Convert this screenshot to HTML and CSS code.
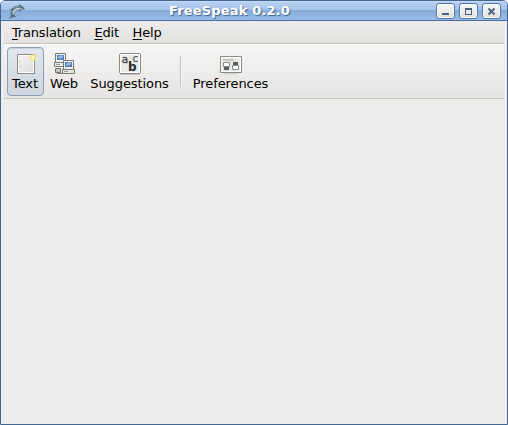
FILE: index.html
```html
<!DOCTYPE html>
<html lang="en">
<head>
<meta charset="utf-8">
<title>FreeSpeak 0.2.0</title>
<link rel="stylesheet" href="styles.css">
</head>
<body>
<div class="window">
  <header class="titlebar">
    <svg class="app-icon" width="20" height="17" viewBox="0 0 20 17">
      <path d="M1.500 6.800 4 5.500C5.500 3.500 8 2.500 10.500 2.500L12.500 1.300l1 1.700c2 .6 3.200 2 3.200 3.500L13 6.500l-1 3-1.500-2.300C8 7.500 6.500 9.500 6.300 12l2.500 2.500-3-.4L.8 16l2-3.500C2.500 10 3 8.500 4 7.500z" fill="#56717f"/>
      <path d="M4.500 11C4.500 8 7 5.200 10 5l5 .5-3 .8C8.500 6.500 6 8.500 5.500 11.500z" fill="#d6d8d4"/>
      <path d="M5.500 5.500C8 3.700 10 3.500 12 4" fill="none" stroke="#a0b0b8"/>
    </svg>
    <h1 class="title">FreeSpeak 0.2.0</h1>
    <div class="controls">
      <button class="control" aria-label="Minimize"><svg width="17" height="14"><path d="M5 9h7v2H5z"/></svg></button>
      <button class="control" aria-label="Maximize"><svg width="17" height="14"><path fill-rule="evenodd" d="M5 4h7v7H5zm1 2v4h5V6z"/></svg></button>
      <button class="control" aria-label="Close"><svg width="17" height="14"><path d="M5.500 4.500l6 6m0-6l-6 6" stroke="#456283" stroke-width="1.900"/></svg></button>
    </div>
  </header>
  <nav class="menubar">
    <span class="menu"><u>T</u>ranslation</span>
    <span class="menu"><u>E</u>dit</span>
    <span class="menu"><u>H</u>elp</span>
  </nav>
  <div class="toolbar">
    <div class="tool tool-text active">
      <svg width="24" height="24" viewBox="0 0 24 24">
        <defs><linearGradient id="paper" x2="1" y2="1"><stop stop-color="#f4f4f4"/><stop offset="1" stop-color="#dddddc"/></linearGradient></defs>
        <path d="M3.500 2.500h17v19h-17z" fill="url(#paper)" stroke="#8c8c88"/>
        <path d="M4.500 3.500h15v17h-15z" fill="none" stroke="#fff"/>
        <path d="M5 9h1v1H5zM5 14h1v1H5z" fill="#a8a8a8"/>
        <circle cx="19" cy="5.500" r="3.300" fill="#f5e675" fill-opacity=".85"/>
        <circle cx="19" cy="5.500" r="1.500" fill="#fffbd0"/>
      </svg>
      <span>Text</span>
    </div>
    <div class="tool tool-web">
      <svg width="24" height="24" viewBox="0 0 24 24">
        <path d="M4.500 16v5.500H10" fill="none" stroke="#777975"/>
        <path d="M2.500 16.500h5v4h-5z" fill="#c7c8c4" stroke="#777975"/>
        <g id="pc">
          <path d="M2.500 1.500h10v9h-10z" fill="#eeeeec" stroke="#777975"/>
          <path d="M4 3h7v5H4z" fill="#5681b8"/>
          <path d="M5 6.500V5l2-1.500h3V5L8 6.500z" fill="#9dbbe0"/>
          <path d="M1.500 10.500h12v4h-12z" fill="#e6e6e3" stroke="#777975"/>
          <path d="M3 12h4v1H3z" fill="#999b96"/>
        </g>
        <use href="#pc" x="8" y="7"/>
      </svg>
      <span>Web</span>
    </div>
    <div class="tool tool-suggestions">
      <svg width="24" height="24" viewBox="0 0 24 24">
        <path d="M2 22.500h20" stroke="#c5c4c2"/>
        <rect x="1.500" y="1.500" width="21" height="20" rx="1.500" fill="#e9eae7" stroke="#888a85"/>
        <path d="M2.500 2.500h19v18h-19z" fill="none" stroke="#fff"/>
        <text class="letter left" x="3.800" y="11">a</text>
        <text class="letter right" x="14.500" y="10">c</text>
        <text class="letter bold" x="10" y="19">b</text>
      </svg>
      <span>Suggestions</span>
    </div>
    <div class="separator"></div>
    <div class="tool tool-preferences">
      <svg width="24" height="24" viewBox="0 0 24 24">
        <ellipse cx="12" cy="21.300" rx="8" ry="1.200" fill="#d2d1cf"/>
        <path d="M1.500 4.500h21v16h-21z" fill="#e9e9e6" stroke="#888a85"/>
        <path d="M2.500 5.500h19v14h-19z" fill="none" stroke="#fff"/>
        <path d="M4 7h11v2H4z" fill="#c9cac6"/>
        <path d="M5 15h5v3H5zM14 10h5v3h-5z" fill="#555f62"/>
        <path d="M4.500 10.500h6v4h-6zM13.500 13.500h6v4h-6z" fill="#fff" stroke="#888a85"/>
      </svg>
      <span>Preferences</span>
    </div>
  </div>
  <main class="content"></main>
</div>
</body>
</html>
```
FILE: styles.css
```css
* { box-sizing: border-box; }
body {
  margin: 0;
  background: #fff;
  font: 13px/16px "DejaVu Sans", sans-serif;
  color: #000;
}
.window {
  width: 508px;
  height: 425px;
  display: flex;
  flex-direction: column;
  border: 1px solid #436591;
  border-radius: 5px 5px 0 0;
  background: #edecea;
  overflow: hidden;
}
.titlebar {
  height: 20px;
  display: flex;
  align-items: flex-start;
  padding: 0 6px 0 7px;
  background: linear-gradient(#b9d2f0 0, #a6c4ea 45%, #85abd9 50%, #9abce5 100%);
  border-bottom: 1px solid #4670a4;
  box-shadow: inset 0 1px #c5d9f2;
}
.app-icon { margin-top: 2px; }
.title {
  flex: 1;
  margin: 0;
  padding: 2px 0 0 141px;
  font-size: 13px;
  line-height: 16px;
  letter-spacing: .17px;
  color: #fff;
  text-shadow: 1px 1px 1px #3e618f;
}
.controls { display: flex; gap: 4px; padding-top: 2px; }
.control {
  width: 19px;
  height: 16px;
  padding: 0;
  border: 1px solid #527aad;
  border-radius: 3px;
  background: linear-gradient(#f8f8f7, #e0dfdd);
  box-shadow: inset 0 0 0 1px #f8f8f7;
}
.control svg { display: block; fill: #456283; }
.menubar {
  height: 23px;
  margin: 0 3px;
  padding: 4px 8px 0;
  display: flex;
  gap: 13.6px;
  letter-spacing: -.18px;
  background: linear-gradient(#edecea, #e3e2df);
  border-bottom: 1px solid #c5c3c0;
}
.menu u { text-underline-offset: 2px; text-decoration-thickness: 1px; }
.toolbar {
  height: 55px;
  margin: 0 3px;
  padding: 2px 3px;
  display: flex;
  background: linear-gradient(#f6f5f4, #e6e4e2);
  border-top: 1px solid #fff;
  border-bottom: 1px solid #c5c3c0;
}
.tool {
  height: 49px;
  display: flex;
  flex-direction: column;
  align-items: center;
  padding-top: 4px;
  border: 1px solid transparent;
  letter-spacing: -.08px;
  white-space: nowrap;
}
.tool span { margin-left: -1px; }
.tool svg { flex: none; }
.tool-text { width: 37px; }
.tool-web { width: 41px; }
.tool-suggestions { width: 90px; }
.tool-preferences { width: 90px; margin-left: 4px; }
.active {
  border-color: #8c9db6;
  border-radius: 4px;
  background: linear-gradient(#e2e7ed, #cdd5df);
  box-shadow: inset 0 1px 1px #c6d1df;
}
.separator {
  width: 2px;
  height: 31px;
  margin: 9px 0 0 5px;
  border-left: 1px solid #c0bebb;
  border-right: 1px solid #faf9f9;
}
.letter { fill: #3c4446; font-family: "DejaVu Sans", sans-serif; }
.left { font-size: 10.5px; stroke: #3c4446; stroke-width: .3px; }
.right { font-size: 10.5px; }
.bold { font-size: 12px; font-weight: bold; fill: #222b2e; }
.content { flex: 1; }
```
